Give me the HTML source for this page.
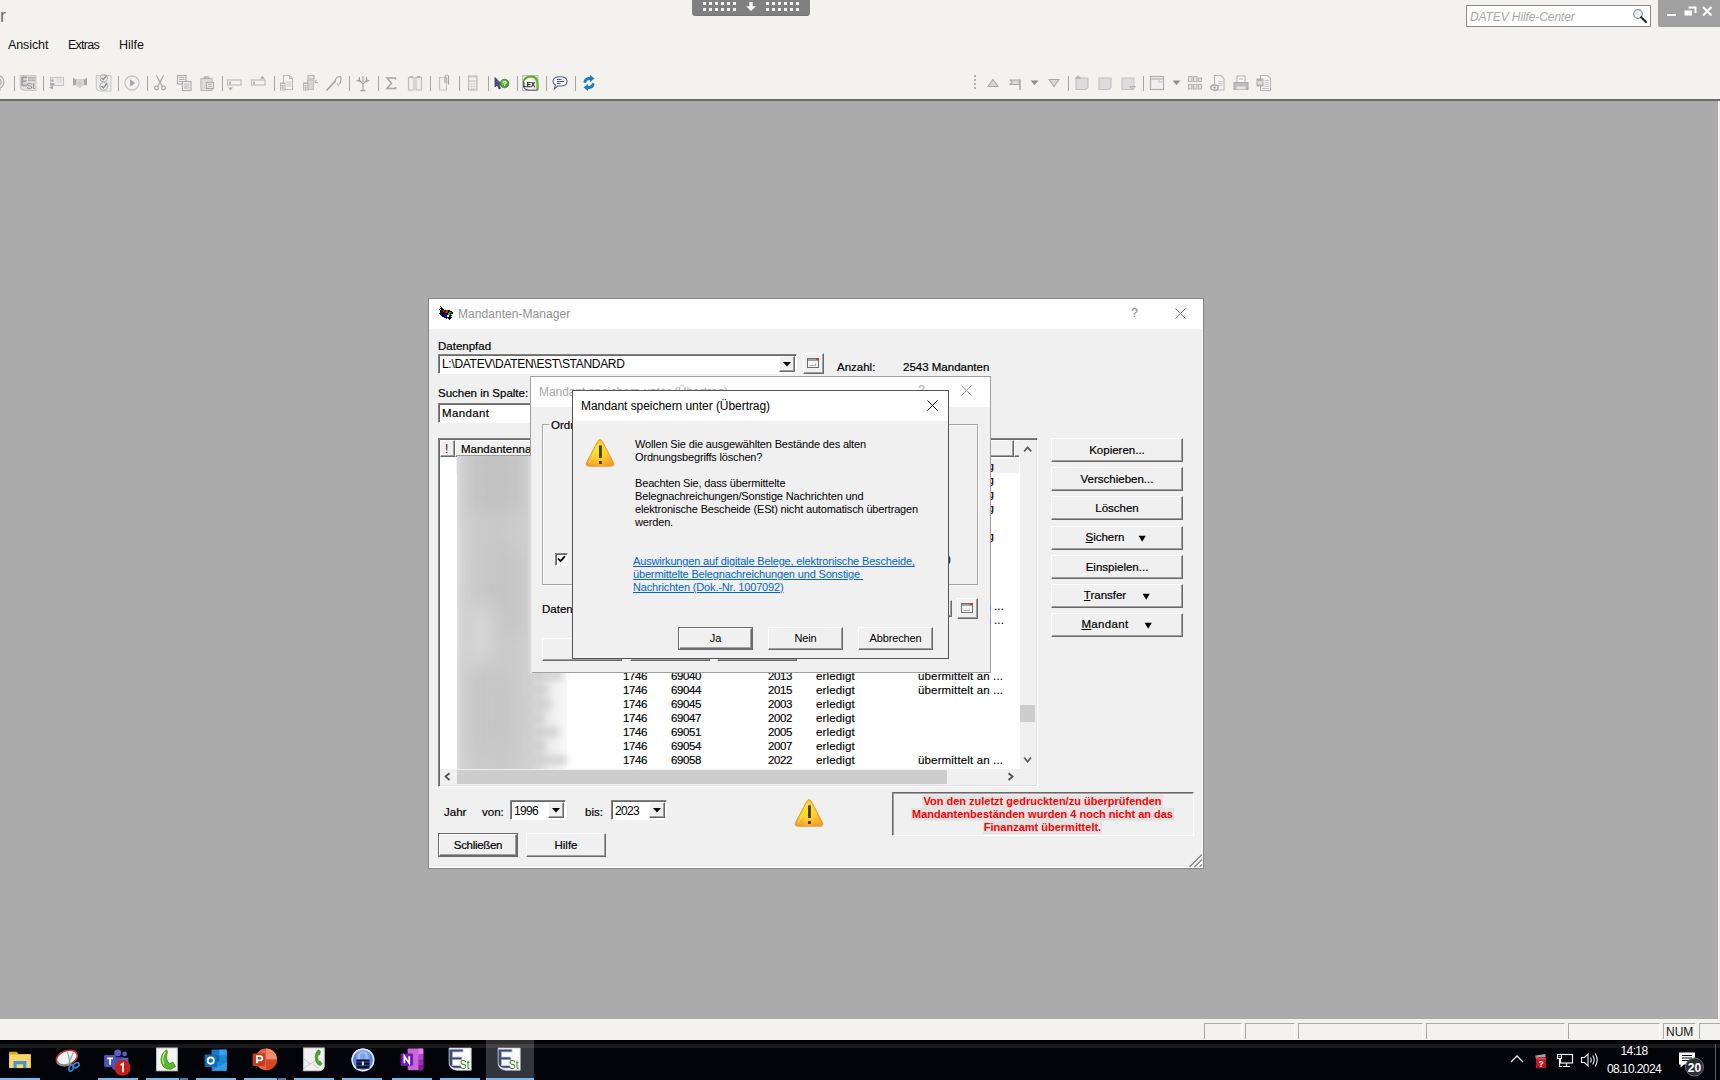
<!DOCTYPE html>
<html><head><meta charset="utf-8"><title>DATEV</title>
<style>
*{box-sizing:border-box;margin:0;padding:0}
html,body{width:1720px;height:1080px;overflow:hidden;background:#ababab;font-family:"Liberation Sans",sans-serif;font-size:12px;color:#000}
.abs{position:absolute}
#top{position:absolute;left:0;top:0;width:1720px;height:99px;background:#f3f2ef}
#topline{position:absolute;left:0;top:99px;width:1720px;height:2px;background:#6a6a6a}
#status{position:absolute;left:0;top:1019px;width:1720px;height:21px;background:#f3f2ef}
#taskbar{position:absolute;left:0;top:1040px;width:1720px;height:40px;background:#02040a}
.t{position:absolute;white-space:nowrap;line-height:1}
.dot{position:absolute;width:3px;height:3px;background:#f4f4f4}
.lbl{font-size:11.5px;margin-top:1px;-webkit-text-stroke:0.2px #000}
.row{font-size:11.5px;letter-spacing:0.15px;line-height:14px;-webkit-text-stroke:0.15px #000}
.num{font-size:11.5px;letter-spacing:-0.4px;line-height:14px;-webkit-text-stroke:0.15px #000}
.tah{font-size:11px;letter-spacing:-0.16px}
.btn{position:absolute;background:#f0f0f0;border:1px solid;border-color:#fff #696969 #696969 #fff;box-shadow:inset -1px -1px 0 #a0a0a0}
.sunk{position:absolute;background:#fff;border:1px solid;border-color:#828282 #fff #fff #828282;box-shadow:inset 1px 1px 0 #696969}
</style></head>
<body>
<div id="top"></div><div id="topline"></div><div class="t" style="left:0px;top:7px;font-size:18px;color:#6c6e74">r</div><div class="t" style="left:8px;top:39px;font-size:12.5px;letter-spacing:-0.1px;color:#111">Ansicht</div><div class="t" style="left:68px;top:39px;font-size:12.5px;letter-spacing:-0.75px;color:#111">Extras</div><div class="t" style="left:119px;top:39px;font-size:12.5px;letter-spacing:0px;color:#111">Hilfe</div><div class="abs" style="left:692px;top:0;width:118px;height:16px;background:#808080;border-radius:0 0 4px 4px;box-shadow:inset 0 -1px 0 #74747e"></div><i class="dot" style="left:703px;top:2px"></i><i class="dot" style="left:703px;top:8px"></i><i class="dot" style="left:709px;top:2px"></i><i class="dot" style="left:709px;top:8px"></i><i class="dot" style="left:715px;top:2px"></i><i class="dot" style="left:715px;top:8px"></i><i class="dot" style="left:721px;top:2px"></i><i class="dot" style="left:721px;top:8px"></i><i class="dot" style="left:727px;top:2px"></i><i class="dot" style="left:727px;top:8px"></i><i class="dot" style="left:733px;top:2px"></i><i class="dot" style="left:733px;top:8px"></i><i class="dot" style="left:766px;top:2px"></i><i class="dot" style="left:766px;top:8px"></i><i class="dot" style="left:772px;top:2px"></i><i class="dot" style="left:772px;top:8px"></i><i class="dot" style="left:778px;top:2px"></i><i class="dot" style="left:778px;top:8px"></i><i class="dot" style="left:784px;top:2px"></i><i class="dot" style="left:784px;top:8px"></i><i class="dot" style="left:790px;top:2px"></i><i class="dot" style="left:790px;top:8px"></i><i class="dot" style="left:796px;top:2px"></i><i class="dot" style="left:796px;top:8px"></i><svg class="abs" style="left:745px;top:1px" width="12" height="11" viewBox="0 0 12 11"><path d="M4.3 1h3.4v4.2h3.3L6 10 1 5.2h3.3z" fill="#f4f4f4"/></svg><div class="abs" style="left:1466px;top:5px;width:185px;height:22px;background:#fff;border:1px solid #8c8c8c"></div><div class="t" style="left:1470px;top:11px;font-size:12px;font-style:italic;color:#a9a6a6;letter-spacing:-0.1px">DATEV Hilfe-Center</div><svg class="abs" style="left:1632px;top:8px" width="16" height="16" viewBox="0 0 16 16"><circle cx="6" cy="6" r="4.3" fill="#e6f1fa" stroke="#8d9499" stroke-width="1.2"/><path d="M9.2 9.2L14 14" stroke="#2b2b2b" stroke-width="2.2" stroke-linecap="round"/></svg><div class="abs" style="left:1658px;top:0;width:62px;height:27px;background:#a0a0a0;border-radius:0 0 0 2px"></div><svg class="abs" style="left:1664px;top:3px" width="52" height="18" viewBox="0 0 52 18"><path d="M3 12h9" stroke="#fff" stroke-width="2"/><path d="M24.5 4.5h7v5.5" stroke="#fff" stroke-width="2" fill="none"/><rect x="20.5" y="7.5" width="7.5" height="5" fill="#fff"/><path d="M39 4l8.5 8.5M47.5 4L39 12.500" stroke="#fff" stroke-width="2"/></svg>
<div class="abs" style="left:14px;top:76px;width:1px;height:15px;background:#a5a5a5"></div><div class="abs" style="left:43px;top:76px;width:1px;height:15px;background:#a5a5a5"></div><div class="abs" style="left:118px;top:76px;width:1px;height:15px;background:#a5a5a5"></div><div class="abs" style="left:147px;top:76px;width:1px;height:15px;background:#a5a5a5"></div><div class="abs" style="left:222px;top:76px;width:1px;height:15px;background:#a5a5a5"></div><div class="abs" style="left:274px;top:76px;width:1px;height:15px;background:#a5a5a5"></div><div class="abs" style="left:349px;top:76px;width:1px;height:15px;background:#a5a5a5"></div><div class="abs" style="left:378px;top:76px;width:1px;height:15px;background:#a5a5a5"></div><div class="abs" style="left:430px;top:76px;width:1px;height:15px;background:#a5a5a5"></div><div class="abs" style="left:459px;top:76px;width:1px;height:15px;background:#a5a5a5"></div><div class="abs" style="left:488px;top:76px;width:1px;height:15px;background:#a5a5a5"></div><div class="abs" style="left:517px;top:76px;width:1px;height:15px;background:#a5a5a5"></div><div class="abs" style="left:546px;top:76px;width:1px;height:15px;background:#a5a5a5"></div><div class="abs" style="left:575px;top:76px;width:1px;height:15px;background:#a5a5a5"></div><svg class="abs" style="will-change:transform;left:-12.0px;top:73.5px" width="18" height="18" viewBox="0 0 18 18" fill="none" stroke="#a8a8a8" stroke-width="1.1"><circle cx="9" cy="8" r="7" fill="#e9e9e9"/><circle cx="9" cy="8" r="4"/><path d="M4 16h9" /></svg><svg class="abs" style="will-change:transform;left:19.0px;top:73.5px" width="18" height="18" viewBox="0 0 18 18" fill="none" stroke="#a8a8a8" stroke-width="1.1"><path d="M1.200 1.500h15.800v15H5q-3.800-.5-3.800-4z" fill="#dcdcdc" stroke="#c2c2c2" stroke-width=".8"/><path d="M2.200 2.500h5.800v1.700H4.200v2.100h3.300V8H4.200v2.600h3.800v1.700H2.200z" fill="#a0a0a0" stroke="none"/><path d="M9 3.800h7.500M9 6.200h7.500" stroke="#b2b2b2" stroke-width="1.400"/><text x="7.600" y="15.300" font-family="Liberation Sans" font-size="9" fill="#8a8a8a" stroke="none">St</text></svg><svg class="abs" style="will-change:transform;left:47.0px;top:73.5px" width="18" height="18" viewBox="0 0 18 18" fill="none" stroke="#a8a8a8" stroke-width="1.1"><rect x="3.500" y="3.500" width="13" height="8" fill="#ececec" stroke="#c4c4c4"/><circle cx="5.500" cy="6.500" r="1.300" fill="#a8a8a8" stroke="none"/><path d="M3.500 9h4v2.500h-4z" fill="#a8a8a8" stroke="none"/><path d="M10 6h5M10 8h5" stroke="#d0d0d0"/><path d="M2 13.500l4-2v4z" fill="#a8a8a8" stroke="none"/></svg><svg class="abs" style="will-change:transform;left:71.0px;top:73.5px" width="18" height="18" viewBox="0 0 18 18" fill="none" stroke="#a8a8a8" stroke-width="1.1"><path d="M4.500 6l2.500-.8 2 .6 2-.6 2.500.8v4.500l-2 .8-2.500 2.200-2.200-.8-2.300-2.200z" fill="#d6d6d6" stroke="#c0c0c0" stroke-width=".7"/><path d="M2 3.500l3 2.300v5L2 11.500zM16 3.500l-3 2.300v5l3 .7z" fill="#a6a6a6" stroke="none"/><path d="M6.500 8.500l3 2.500M8 7.500l3 2.500" stroke="#b8b8b8" stroke-width=".8"/></svg><svg class="abs" style="will-change:transform;left:94.5px;top:73.5px" width="18" height="18" viewBox="0 0 18 18" fill="none" stroke="#a8a8a8" stroke-width="1.1"><path d="M1.200 1.500h14.800v15.500H5q-3.800-.5-3.800-4z" fill="#ececec" stroke="#c4c4c4" stroke-width=".9"/><circle cx="8.800" cy="4.200" r="3.800" stroke="#b4b4b4" stroke-width="1"/><circle cx="8.800" cy="12.300" r="4" stroke="#b4b4b4" stroke-width="1"/><path d="M6.500 3.800l1.800 1.700 3.400-4M6.300 12l2 2 4-5" stroke="#909090" stroke-width="1.400"/></svg><svg class="abs" style="will-change:transform;left:123.0px;top:73.5px" width="18" height="18" viewBox="0 0 18 18" fill="none" stroke="#a8a8a8" stroke-width="1.1"><circle cx="9" cy="9" r="7" fill="#f1f1f1" stroke="#c6c6c6" stroke-width="1.300"/><path d="M7 5.200l5.200 3.800L7 12.800z" fill="#a8a8a8" stroke="none"/></svg><svg class="abs" style="will-change:transform;left:151.0px;top:73.5px" width="18" height="18" viewBox="0 0 18 18" fill="none" stroke="#a8a8a8" stroke-width="1.1"><path d="M5.500 1.500l5.800 11M12.500 1.500l-5.800 11" stroke="#a8a8a8" stroke-width="1.300"/><circle cx="5.500" cy="14" r="1.900"/><circle cx="12.500" cy="14" r="1.900"/></svg><svg class="abs" style="will-change:transform;left:174.5px;top:73.5px" width="18" height="18" viewBox="0 0 18 18" fill="none" stroke="#a8a8a8" stroke-width="1.1"><rect x="2.500" y="1.500" width="8.500" height="8.500" fill="#f0f0f0"/><rect x="7.500" y="7.500" width="8.500" height="9" fill="#f0f0f0"/><path d="M4 3.500h5.500M4 5.500h5.500M4 7.500h3M9 10h5.500M9 12h5.500M9 14h5.500" stroke-width=".9"/></svg><svg class="abs" style="will-change:transform;left:198.0px;top:73.5px" width="18" height="18" viewBox="0 0 18 18" fill="none" stroke="#a8a8a8" stroke-width="1.1"><path d="M3 4.500h11v12H3z" fill="#dcdcdc" stroke="#b8b8b8"/><path d="M6 4.500v-1.500h1.500q1-2.200 2 0H11v1.500z" fill="#c8c8c8" stroke="#a8a8a8" stroke-width=".9"/><rect x="8.500" y="8.500" width="7" height="6" fill="#eee" stroke="#a8a8a8"/><path d="M10 10.500h4M10 12.500h4" stroke-width=".9"/></svg><svg class="abs" style="will-change:transform;left:226.0px;top:73.5px" width="18" height="18" viewBox="0 0 18 18" fill="none" stroke="#a8a8a8" stroke-width="1.1"><rect x="1.500" y="6" width="13.500" height="5" fill="#f3f3f3" stroke="#bdbdbd" stroke-width="1.200"/><path d="M4 7.500v2.500" stroke="#9a9a9a" stroke-width="1.300"/><path d="M2 13.500h5l-2.500 2.800z" fill="#a8a8a8" stroke="none"/></svg><svg class="abs" style="will-change:transform;left:250.0px;top:73.5px" width="18" height="18" viewBox="0 0 18 18" fill="none" stroke="#a8a8a8" stroke-width="1.1"><rect x="1.500" y="6" width="13.500" height="5" fill="#f3f3f3" stroke="#bdbdbd" stroke-width="1.200"/><path d="M4 7.500v2.500" stroke="#9a9a9a" stroke-width="1.300"/><path d="M10 4.800h5l-2.500-2.800z" fill="#a8a8a8" stroke="none"/></svg><svg class="abs" style="will-change:transform;left:277.5px;top:73.5px" width="18" height="18" viewBox="0 0 18 18" fill="none" stroke="#a8a8a8" stroke-width="1.1"><path d="M5.500 1.500h6l3 3v11h-9z" fill="#f4f4f4" stroke="#b9b9b9"/><path d="M11.500 1.500v3h3" stroke="#b9b9b9"/><path d="M8.500 8h5M8.500 10h5M8.500 12h5" stroke="#c0c0c0" stroke-width=".9"/><rect x="2" y="8.500" width="5.500" height="8" fill="#b9b9b9" stroke="none"/><path d="M3 10h3.500v1.300H3zM3 12.300h1.300v1.200H3zM5.200 12.300h1.300v1.200H5.200zM3 14.300h1.300v1.200H3zM5.200 14.300h1.300v1.200H5.200z" fill="#f2f2f2" stroke="none"/></svg><svg class="abs" style="will-change:transform;left:301.0px;top:73.5px" width="18" height="18" viewBox="0 0 18 18" fill="none" stroke="#a8a8a8" stroke-width="1.1"><rect x="7" y="1.500" width="6" height="3.500" fill="#e4e4e4" stroke="#b5b5b5"/><rect x="6.500" y="6" width="6" height="9.500" fill="#d6d6d6" stroke="#c0c0c0"/><path d="M13.500 8.500l2-2.500M14 9l3-.5" stroke="#a8a8a8" stroke-width="1.200"/><rect x="2" y="8.500" width="5.500" height="8" fill="#b4b4b4" stroke="none"/><path d="M3 10h3.500v1.300H3zM3 12.300h1.300v1.200H3zM5.200 12.300h1.300v1.200H5.200zM3 14.300h1.300v1.200H3zM5.200 14.300h1.300v1.200H5.200z" fill="#f2f2f2" stroke="none"/></svg><svg class="abs" style="will-change:transform;left:324.5px;top:73.5px" width="18" height="18" viewBox="0 0 18 18" fill="none" stroke="#a8a8a8" stroke-width="1.1"><path d="M1.500 16.500l9-9.500" stroke="#9d9d9d" stroke-width="1.600"/><path d="M10 7q1-4.500 5.500-4.500q1.500 3-1 7.500" stroke="#a8a8a8" stroke-width="1.200"/><path d="M12 9.500l2 2.500" stroke="#a8a8a8"/></svg><svg class="abs" style="will-change:transform;left:353.5px;top:73.5px" width="18" height="18" viewBox="0 0 18 18" fill="none" stroke="#a8a8a8" stroke-width="1.1"><path d="M9 16.500V9M9 10L4.500 5.500M9 10l4.500-4.500M9 8V2M6.500 7.500l-4-1M11.500 7.500l4-1M5.500 6.500V3M12.500 6.500V3" stroke="#a0a0a0" stroke-width="1.100"/><path d="M6.500 16.500h5" stroke="#a0a0a0" stroke-width="1.400"/></svg><svg class="abs" style="will-change:transform;left:382.0px;top:73.5px" width="18" height="18" viewBox="0 0 18 18" fill="none" stroke="#a8a8a8" stroke-width="1.1"><path d="M13.500 5.500V4H5l4.500 5.300L5 14.500h8.500V13" stroke="#a4a4a4" stroke-width="1.500" fill="none"/></svg><svg class="abs" style="will-change:transform;left:406.0px;top:73.5px" width="18" height="18" viewBox="0 0 18 18" fill="none" stroke="#a8a8a8" stroke-width="1.1"><rect x="2.500" y="3.500" width="5.500" height="12.500" fill="#efefef" stroke="#c0c0c0" stroke-width="1.200"/><rect x="10" y="3.500" width="5.500" height="12.500" fill="#efefef" stroke="#c0c0c0" stroke-width="1.200"/><path d="M3.500 2h3.500v2h-3.500zM11 2h3.500v2H11z" fill="#b5b5b5" stroke="none"/></svg><svg class="abs" style="will-change:transform;left:436.0px;top:73.5px" width="18" height="18" viewBox="0 0 18 18" fill="none" stroke="#a8a8a8" stroke-width="1.1"><path d="M3.500 3.500h7v12.500h-7z" fill="#f0f0f0" stroke="#c3c3c3" stroke-width="1.200"/><path d="M9 9V3q0-2 1.800-2t1.800 2v7.500" stroke="#a4a4a4" stroke-width="1.100"/><path d="M10.800 4v5" stroke="#b5b5b5"/></svg><svg class="abs" style="will-change:transform;left:463.5px;top:73.5px" width="18" height="18" viewBox="0 0 18 18" fill="none" stroke="#a8a8a8" stroke-width="1.1"><rect x="4.500" y="2" width="8.500" height="14" fill="#d8d8d8" stroke="#bcbcbc"/><rect x="5.500" y="3.500" width="6.500" height="2.500" fill="#f0f0f0" stroke="none"/><path d="M5.500 8h1.500v1.500H5.500zM8 8h1.500v1.500H8zM10.500 8H12v1.500h-1.500zM5.500 10.500h1.500V12H5.500zM8 10.500h1.500V12H8zM10.500 10.500H12V12h-1.500zM5.500 13h1.500v1.500H5.500zM8 13h1.500v1.500H8zM10.500 13H12v1.500h-1.500z" fill="#f3f3f3" stroke="none"/></svg><svg class="abs" style="will-change:transform;left:492.0px;top:73.5px" width="18" height="18" viewBox="0 0 18 18" fill="none" stroke="#a8a8a8" stroke-width="1.1"><path d="M3 3.500v9.500l2.200-2.200 1.900 4.200 1.500-.7-1.900-4h3z" fill="#4a5a8c" stroke="#2d3a66" stroke-width=".8"/><circle cx="12.500" cy="9.500" r="4.300" fill="#5a9e2f" stroke="#3f7a1d" stroke-width=".8"/><circle cx="11.800" cy="8.500" r="2.600" fill="#8cc95a" stroke="none" opacity=".7"/><text x="10.400" y="12.300" font-family="Liberation Sans" font-weight="bold" font-size="7.500" fill="#fff" stroke="none">?</text></svg><svg class="abs" style="will-change:transform;left:521.0px;top:73.5px" width="18" height="18" viewBox="0 0 18 18" fill="none" stroke="#a8a8a8" stroke-width="1.1"><rect x="1.500" y="1.500" width="15.500" height="15" fill="#e6e6e6" stroke="#b4b4b4" stroke-width=".8"/><path d="M2.500 8.500Q3.500 2.500 10 2.500T16.500 9.500v6.500" fill="none" stroke="#5aa820" stroke-width="2"/><path d="M14.500 5q2 2.500 1.800 10" fill="none" stroke="#7cc43c" stroke-width="1.200"/><path d="M2.200 10q0 5.500 6 5.800h8.300v.8H8Q1.800 16.500 2.200 10z" fill="#3a3a3a" stroke="none"/><ellipse cx="8.300" cy="10" rx="6" ry="4.800" fill="#fff" stroke="none"/><text x="2" y="12.800" font-family="Liberation Sans" font-weight="bold" font-size="7.800" fill="#1c1c1c" stroke="#1c1c1c" stroke-width=".25" textLength="12" lengthAdjust="spacingAndGlyphs">LEX</text></svg><svg class="abs" style="will-change:transform;left:551.0px;top:73.5px" width="18" height="18" viewBox="0 0 18 18" fill="none" stroke="#a8a8a8" stroke-width="1.1"><path d="M9 2.800q7 0 7 4.600t-7 4.600q-1.300 0-2.300-.2L3.500 14.800l.9-3.800Q2 9.700 2 7.400 2 2.800 9 2.800z" fill="#f6f7fa" stroke="#56627a" stroke-width="1.100"/><path d="M6 5.500h4.500M6 7.500h7M6 9.500h3.500" stroke="#2e3852" stroke-width=".85"/></svg><svg class="abs" style="will-change:transform;left:580.0px;top:73.5px" width="18" height="18" viewBox="0 0 18 18" fill="none" stroke="#a8a8a8" stroke-width="1.1"><path d="M3.500 8.500q0-5 5.500-5.500l1 0V1l4.500 3.500-4.500 3.500V6q-3.500 0-4 3z" fill="#1b7fc0" stroke="none"/><path d="M14.500 9.500q0 5-5.500 5.500l-1 0v2l-4.500-3.500L8 10v2q3.500 0 4-3z" fill="#1b7fc0" stroke="none"/></svg><div class="abs" style="left:974px;top:75px;width:2px;height:2px;background:#b3b3b3"></div><div class="abs" style="left:974px;top:79px;width:2px;height:2px;background:#b3b3b3"></div><div class="abs" style="left:974px;top:83px;width:2px;height:2px;background:#b3b3b3"></div><div class="abs" style="left:974px;top:87px;width:2px;height:2px;background:#b3b3b3"></div><div class="abs" style="left:1068px;top:76px;width:1px;height:15px;background:#a5a5a5"></div><div class="abs" style="left:1143px;top:76px;width:1px;height:15px;background:#a5a5a5"></div><svg class="abs" style="will-change:transform;left:983.5px;top:73.5px" width="18" height="18" viewBox="0 0 18 18" fill="none" stroke="#a8a8a8" stroke-width="1.1"><path d="M4 12.500h10L9 5.500z" fill="#d8d8d8" stroke="#a8a8a8"/></svg><svg class="abs" style="will-change:transform;left:1007.0px;top:73.5px" width="18" height="18" viewBox="0 0 18 18" fill="none" stroke="#a8a8a8" stroke-width="1.1"><path d="M3 6h9.500v4.500H3l2-2.200z" fill="#d8d8d8" stroke="#a8a8a8"/><path d="M13 5.500v10.500" stroke="#a8a8a8" stroke-width="1.500"/></svg><svg class="abs" style="left:1030px;top:80px" width="9" height="6"><path d="M0.500 0.500h8L4.500 5z" fill="#8e8e8e"/></svg><svg class="abs" style="will-change:transform;left:1044.5px;top:73.5px" width="18" height="18" viewBox="0 0 18 18" fill="none" stroke="#a8a8a8" stroke-width="1.1"><path d="M4 5.500h10L9 12.500z" fill="#d8d8d8" stroke="#a8a8a8"/></svg><svg class="abs" style="will-change:transform;left:1072.5px;top:73.5px" width="18" height="18" viewBox="0 0 18 18" fill="none" stroke="#a8a8a8" stroke-width="1.1"><path d="M3 4h12v9.500l-2 2H3z" fill="#dcdcdc" stroke="#c2c2c2"/><path d="M2.500 4.200h5L5 1.500z" fill="#c4c4c4" stroke="#a8a8a8" stroke-width=".8"/></svg><svg class="abs" style="will-change:transform;left:1095.5px;top:73.5px" width="18" height="18" viewBox="0 0 18 18" fill="none" stroke="#a8a8a8" stroke-width="1.1"><path d="M3 4h12v9.500l-2 2H3z" fill="#dcdcdc" stroke="#c2c2c2"/></svg><svg class="abs" style="will-change:transform;left:1118.5px;top:73.5px" width="18" height="18" viewBox="0 0 18 18" fill="none" stroke="#a8a8a8" stroke-width="1.1"><path d="M3 4h12v9.500l-2 2H3z" fill="#dcdcdc" stroke="#c2c2c2"/><path d="M10.500 12.500h6L13.500 16z" fill="#cfcfcf" stroke="#a8a8a8" stroke-width=".8"/></svg><svg class="abs" style="will-change:transform;left:1148.0px;top:73.5px" width="18" height="18" viewBox="0 0 18 18" fill="none" stroke="#a8a8a8" stroke-width="1.1"><rect x="2.500" y="2.500" width="13" height="13" fill="#efefef" stroke="#b0b0b0" stroke-width="1.200"/><path d="M2.500 5h13" stroke="#b0b0b0"/><path d="M11 5v3h4.500" stroke="#c4c4c4"/></svg><svg class="abs" style="left:1172px;top:80px" width="9" height="6"><path d="M0.500 0.500h8L4.500 5z" fill="#8e8e8e"/></svg><svg class="abs" style="will-change:transform;left:1185.5px;top:73.5px" width="18" height="18" viewBox="0 0 18 18" fill="none" stroke="#a8a8a8" stroke-width="1.1"><path d="M2.500 2.500h3.500v5H2.500zM7.500 2.500H11v5H7.500zM12.500 4h3v3.500h-3zM2.500 10.500h3.500v4.500H2.500zM7.500 10.500H11v4.500H7.500zM12.500 10.500h3v4.500h-3z" fill="#e4e4e4" stroke="#b5b5b5"/></svg><svg class="abs" style="will-change:transform;left:1208.5px;top:73.5px" width="18" height="18" viewBox="0 0 18 18" fill="none" stroke="#a8a8a8" stroke-width="1.1"><path d="M5.500 1.500h6.500l3 3v11.500H5.500z" fill="#f4f4f4" stroke="#b5b5b5"/><path d="M9 7.500h4.500M9 9.500h4.500M9 11.500h4.500" stroke="#c0c0c0" stroke-width=".9"/><ellipse cx="5.500" cy="13.500" rx="3.800" ry="2.600" fill="#e8e8e8" stroke="#a0a0a0"/><circle cx="5.500" cy="13.500" r="1.100" fill="#9a9a9a" stroke="none"/></svg><svg class="abs" style="will-change:transform;left:1231.5px;top:73.5px" width="18" height="18" viewBox="0 0 18 18" fill="none" stroke="#a8a8a8" stroke-width="1.1"><path d="M5 8.500V2h8v6.500" fill="#f4f4f4" stroke="#b5b5b5"/><path d="M2 8.500h14v7H2z" fill="#bdbdbd" stroke="#a8a8a8"/><path d="M4.500 12.500h9v3h-9z" fill="#e0e0e0" stroke="none"/><path d="M7 5h4" stroke="#c0c0c0"/></svg><svg class="abs" style="will-change:transform;left:1254.5px;top:73.5px" width="18" height="18" viewBox="0 0 18 18" fill="none" stroke="#a8a8a8" stroke-width="1.1"><path d="M5.500 1.500h7l3 3v12H5.500z" fill="#f4f4f4" stroke="#b5b5b5"/><path d="M9.500 6.500h4.500M9.500 8.500h4.500M9.500 10.500h4.500M9.500 12.500h4.500M7 14.500h7" stroke="#c0c0c0" stroke-width=".9"/><rect x="1.500" y="4.500" width="7" height="8" fill="#b0b0b0" stroke="none"/><path d="M2.800 6.500l1 4 1.200-3.200 1.200 3.200 1-4" stroke="#f2f2f2" stroke-width=".9"/></svg>
<div class="abs" style="left:428px;top:298px;width:776px;height:571px;background:#f0f0f0;border:1px solid #858585;box-shadow:inset -1px -1px 0 #fff"></div><div class="abs" style="left:429px;top:299px;width:774px;height:30px;background:#fff"></div><svg class="abs" style="left:437px;top:306px" width="17" height="15" viewBox="0 0 17 15" shape-rendering="crispEdges"><path d="M3 0h1v1h1v1h1v1h1v1h6v1h2v1h1v2h-2v1h1v1h-1v1h1v1h-1v1h-1v1h-1v-1h-1v-1h-1v1h-1v-1h-2v-1h-2v-1H4V9H3V8H2V7h1V6H2V5h1V4H2V3h1V2h1V1H3z" fill="#000"/><path d="M3 3h1v1H3zM2 5h1v1H2zM1 7h1v1H1zM3 1h1v1H3z" fill="#fff"/><path d="M4 4h1v1H4zM6 4h2v1H6zM6 5h1v1H6zM8.500 4h2v1h-2zM8.500 5h2v1.500h-2zM8 6h2v1H8z" fill="#f00"/><path d="M11.500 5.500h2v1h-2zM11 6.500h2v1.500h-2zM11 8h1.500v.5H11z" fill="#0d0"/><path d="M3 6h1.500v1H3zM4 7.500h2V9H4zM7 8h2.500v2.500H7z" fill="#00f"/><path d="M10 8.500h2v1h-2zM9.500 9.500h2.500V11H9.500z" fill="#ff0"/></svg><div class="t" style="left:458px;top:308px;font-size:12px;letter-spacing:0.05px;color:#8f8f8f">Mandanten-Manager</div><div class="t" style="left:1131px;top:307px;font-size:12.5px;color:#858585">?</div><svg class="abs" style="left:1175px;top:308px" width="11" height="11" viewBox="0 0 11 11"><path d="M.5.5l10 10M10.500.5l-10 10" stroke="#777" stroke-width="1"/></svg><div class="t lbl" style="left:438px;top:340px">Datenpfad</div><div class="sunk" style="left:438px;top:354px;width:359px;height:20px"></div><div class="t" style="left:442px;top:358px;font-size:12px;letter-spacing:-0.3px">L:\DATEV\DATEN\EST\STANDARD</div><div class="btn" style="left:779px;top:356px;width:16px;height:16px"></div><svg class="abs" style="left:783px;top:362px" width="8" height="5"><path d="M0 0h8L4 4.500z" fill="#000"/></svg><div class="btn" style="left:803px;top:353px;width:21px;height:21px"></div><svg class="abs" style="left:807px;top:358px" width="12" height="11" viewBox="0 0 12 11"><rect x=".5" y=".5" width="11" height="9" fill="#f6f6f6" stroke="#6e6e6e"/><rect x="1" y="1" width="10" height="2" fill="#a0a0a0"/><path d="M2.500 7.500h6M8.500 5.500v2" stroke="#9a9a9a" stroke-width=".8"/><rect x="9" y="0" width="3" height="2" fill="#e03030"/></svg><div class="t lbl" style="left:837px;top:361px">Anzahl:</div><div class="t lbl" style="left:903px;top:361px">2543 Mandanten</div><div class="t lbl" style="left:438px;top:387px">Suchen in Spalte:</div><div class="sunk" style="left:438px;top:403px;width:120px;height:20px"></div><div class="t lbl" style="left:442px;top:407px;letter-spacing:.35px">Mandant</div><div class="abs" style="left:438px;top:438px;width:600px;height:349px;background:#fff;border:1px solid;border-color:#828282 #fff #fff #828282;box-shadow:inset 1px 1px 0 #696969,inset -1px -1px 0 #e3e3e3"></div><div class="abs" style="left:440px;top:440px;width:580px;height:17px;background:#f0f0f0"></div><div class="abs" style="left:440px;top:440px;width:15px;height:17px;background:#f0f0f0;border:1px solid;border-color:#fff #696969 #696969 #fff;box-shadow:inset -1px -1px 0 #a0a0a0"></div><div class="abs" style="left:455px;top:440px;width:200px;height:17px;background:#f0f0f0;border:1px solid;border-color:#fff #696969 #696969 #fff;box-shadow:inset -1px -1px 0 #a0a0a0"></div><div class="abs" style="left:900px;top:440px;width:114px;height:17px;background:#f0f0f0;border:1px solid;border-color:#fff #696969 #696969 #fff;box-shadow:inset -1px -1px 0 #a0a0a0"></div><div class="abs" style="left:1014px;top:440px;width:5px;height:17px;background:#f0f0f0;border-left:1px solid #fff;border-top:1px solid #fff;border-bottom:1px solid #696969;box-shadow:inset 0 -1px 0 #a0a0a0"></div><div class="t" style="left:445px;top:443px;font-size:12px;color:#4a0028">!</div><div class="t lbl" style="left:461px;top:443px">Mandantenname</div><div class="abs" style="left:456px;top:459px;width:563px;height:14px;background:#f0f0f0"></div><div class="abs" style="left:457px;top:456px;width:110px;height:314px;background:linear-gradient(90deg,#d6d6d6 0,#cfcfcf 20%,#d2d2d2 60%,#d4d4d4 68%,#dadada 75%,#e9e9e9 83%,#f3f3f3 92%,#f8f8f8 100%)"></div><div class="abs" style="left:457px;top:456px;width:76px;height:314px;overflow:hidden;background:linear-gradient(90deg,#dedede 0,#d2d2d2 7%,#cbcbcb 25%,#c9c9c9 55%,#cecece 85%,#d3d3d3 100%)"><div class="abs" style="left:14px;top:-6px;width:50px;height:60px;background:#c2c2c2;filter:blur(9px)"></div><div class="abs" style="left:30px;top:90px;width:34px;height:90px;background:#c5c5c5;filter:blur(10px)"></div><div class="abs" style="left:10px;top:150px;width:26px;height:60px;background:#d6d6d6;filter:blur(9px)"></div><div class="abs" style="left:16px;top:215px;width:40px;height:80px;background:#c6c6c6;filter:blur(10px)"></div></div><div class="abs" style="left:533px;top:671px;width:30px;height:10px;background:#cfcfcf;filter:blur(3px);opacity:.8"></div><div class="abs" style="left:533px;top:685px;width:14px;height:10px;background:#cfcfcf;filter:blur(3px);opacity:.8"></div><div class="abs" style="left:533px;top:699px;width:18px;height:10px;background:#cfcfcf;filter:blur(3px);opacity:.8"></div><div class="abs" style="left:533px;top:713px;width:10px;height:10px;background:#cfcfcf;filter:blur(3px);opacity:.8"></div><div class="abs" style="left:533px;top:727px;width:26px;height:10px;background:#cfcfcf;filter:blur(3px);opacity:.8"></div><div class="abs" style="left:533px;top:741px;width:12px;height:10px;background:#cfcfcf;filter:blur(3px);opacity:.8"></div><div class="abs" style="left:533px;top:755px;width:34px;height:10px;background:#cfcfcf;filter:blur(3px);opacity:.8"></div><div class="t num" style="left:623px;top:669px">1746</div><div class="t num" style="left:671px;top:669px">69040</div><div class="t num" style="left:768px;top:669px">2013</div><div class="t row" style="left:816px;top:669px">erledigt</div><div class="t row" style="left:918px;top:669px">übermittelt an ...</div><div class="t num" style="left:623px;top:683px">1746</div><div class="t num" style="left:671px;top:683px">69044</div><div class="t num" style="left:768px;top:683px">2015</div><div class="t row" style="left:816px;top:683px">erledigt</div><div class="t row" style="left:918px;top:683px">übermittelt an ...</div><div class="t num" style="left:623px;top:697px">1746</div><div class="t num" style="left:671px;top:697px">69045</div><div class="t num" style="left:768px;top:697px">2003</div><div class="t row" style="left:816px;top:697px">erledigt</div><div class="t num" style="left:623px;top:711px">1746</div><div class="t num" style="left:671px;top:711px">69047</div><div class="t num" style="left:768px;top:711px">2002</div><div class="t row" style="left:816px;top:711px">erledigt</div><div class="t num" style="left:623px;top:725px">1746</div><div class="t num" style="left:671px;top:725px">69051</div><div class="t num" style="left:768px;top:725px">2005</div><div class="t row" style="left:816px;top:725px">erledigt</div><div class="t num" style="left:623px;top:739px">1746</div><div class="t num" style="left:671px;top:739px">69054</div><div class="t num" style="left:768px;top:739px">2007</div><div class="t row" style="left:816px;top:739px">erledigt</div><div class="t num" style="left:623px;top:753px">1746</div><div class="t num" style="left:671px;top:753px">69058</div><div class="t num" style="left:768px;top:753px">2022</div><div class="t row" style="left:816px;top:753px">erledigt</div><div class="t row" style="left:918px;top:753px">übermittelt an ...</div><div class="abs" style="left:991px;top:459px;width:4px;height:14px;overflow:hidden"><div class="t row" style="left:-3.500px;top:0px">g</div></div><div class="abs" style="left:991px;top:473px;width:4px;height:14px;overflow:hidden"><div class="t row" style="left:-3.500px;top:0px">g</div></div><div class="abs" style="left:991px;top:487px;width:4px;height:14px;overflow:hidden"><div class="t row" style="left:-3.500px;top:0px">g</div></div><div class="abs" style="left:991px;top:501px;width:4px;height:14px;overflow:hidden"><div class="t row" style="left:-3.500px;top:0px">g</div></div><div class="abs" style="left:991px;top:529px;width:4px;height:14px;overflow:hidden"><div class="t row" style="left:-3.500px;top:0px">g</div></div><div class="t row" style="left:994px;top:599px">...</div><div class="t row" style="left:994px;top:613px">...</div><div class="abs" style="left:1020px;top:440px;width:16px;height:345px;background:#f0f0f0"></div><svg class="abs" style="left:1023px;top:445px" width="10" height="8"><path d="M1.200 6.300l3.500-4 3.500 4" stroke="#606060" stroke-width="1.800" fill="none"/></svg><svg class="abs" style="left:1023px;top:756px" width="10" height="8"><path d="M1.200 1.500l3.400 4 3.400-4" stroke="#606060" stroke-width="1.800" fill="none"/></svg><div class="abs" style="left:1020px;top:705px;width:15px;height:17px;background:#cdcdcd"></div><div class="abs" style="left:440px;top:769px;width:596px;height:16px;background:#f0f0f0"></div><div class="abs" style="left:457px;top:770px;width:490px;height:14px;background:#cdcdcd"></div><svg class="abs" style="left:444px;top:772px" width="8" height="10"><path d="M5.500 1.200l-4 3.400 4 3.400" stroke="#505050" stroke-width="1.800" fill="none"/></svg><svg class="abs" style="left:1007px;top:772px" width="8" height="10"><path d="M1.500 1.200l4 3.400-4 3.400" stroke="#505050" stroke-width="1.800" fill="none"/></svg><div class="btn" style="left:1051px;top:438px;width:132px;height:24px"></div><div class="t lbl" style="left:1051px;top:444px;width:132px;text-align:center">Kopieren...</div><div class="btn" style="left:1051px;top:467px;width:132px;height:24px"></div><div class="t lbl" style="left:1051px;top:473px;width:132px;text-align:center">Verschieben...</div><div class="btn" style="left:1051px;top:496px;width:132px;height:24px"></div><div class="t lbl" style="left:1051px;top:502px;width:132px;text-align:center">Löschen</div><div class="btn" style="left:1051px;top:526px;width:132px;height:24px"></div><div class="t lbl" style="left:1051px;top:531px;width:108px;text-align:center"><u>S</u>ichern</div><svg class="abs" style="left:1138px;top:535px" width="9" height="8"><path d="M.6 .8h7.200L4.200 6.800z" fill="#000"/></svg><div class="btn" style="left:1051px;top:555px;width:132px;height:24px"></div><div class="t lbl" style="left:1051px;top:561px;width:132px;text-align:center">Einspielen...</div><div class="btn" style="left:1051px;top:584px;width:132px;height:24px"></div><div class="t lbl" style="left:1051px;top:589px;width:108px;text-align:center"><u>T</u>ransfer</div><svg class="abs" style="left:1142px;top:593px" width="9" height="8"><path d="M.6 .8h7.200L4.200 6.800z" fill="#000"/></svg><div class="btn" style="left:1051px;top:613px;width:132px;height:24px"></div><div class="t lbl" style="left:1051px;top:618px;width:108px;text-align:center;letter-spacing:.35px"><u>M</u>andant</div><svg class="abs" style="left:1144px;top:622px" width="9" height="8"><path d="M.6 .8h7.200L4.200 6.800z" fill="#000"/></svg><div class="t lbl" style="left:444px;top:806px">Jahr</div><div class="t lbl" style="left:482px;top:806px">von:</div><div class="t lbl" style="left:585px;top:806px">bis:</div><div class="sunk" style="left:510px;top:800px;width:56px;height:20px"></div><div class="t" style="left:514px;top:805px;font-size:12px;letter-spacing:-0.7px">1996</div><div class="btn" style="left:548px;top:802px;width:16px;height:16px"></div><svg class="abs" style="left:552px;top:808px" width="8" height="5"><path d="M0 0h8L4 4.500z" fill="#000"/></svg><div class="sunk" style="left:611px;top:800px;width:56px;height:20px"></div><div class="t" style="left:615px;top:805px;font-size:12px;letter-spacing:-0.7px">2023</div><div class="btn" style="left:649px;top:802px;width:16px;height:16px"></div><svg class="abs" style="left:653px;top:808px" width="8" height="5"><path d="M0 0h8L4 4.500z" fill="#000"/></svg><div class="abs" style="left:438px;top:833px;width:80px;height:24px;border:1px solid #6b6b6b"></div><div class="btn" style="left:439px;top:834px;width:78px;height:22px"></div><div class="t lbl" style="left:438px;top:839px;width:80px;text-align:center;letter-spacing:-0.3px">Schließen</div><div class="btn" style="left:526px;top:833px;width:80px;height:24px"></div><div class="t lbl" style="left:526px;top:839px;width:80px;text-align:center">Hilfe</div><svg class="abs" style="left:794px;top:798px" width="30" height="31" viewBox="0 0 30 31"><defs><radialGradient id="wg1" cx=".46" cy=".42" r=".62"><stop offset="0" stop-color="#ffe60a"/><stop offset=".45" stop-color="#fdd12c"/><stop offset="1" stop-color="#f2a02c"/></radialGradient></defs><path d="M15 1.700q1.300 0 2.100 1.400l11.400 21.600q1.300 2.900-1.800 3.500H3.300q-3.100-.6-1.800-3.500L12.900 3.100q.8-1.400 2.100-1.400z" fill="url(#wg1)" stroke="#eb9a2a" stroke-width="1"/><path d="M3.800 25.500L14.300 5.500" stroke="#fff3b0" stroke-width="1" opacity=".55"/><rect x="14" y="7.400" width="2.900" height="12.600" fill="#4a3d0a"/><rect x="14" y="23" width="2.900" height="2.900" fill="#4a3d0a"/></svg><div class="abs" style="left:892px;top:792px;width:302px;height:44px;border:1px solid;border-color:#696969 #fff #fff #696969;box-shadow:inset 1px 1px 0 #a0a0a0"></div><div class="t" style="left:893px;top:795px;width:299px;text-align:center;font-size:11px;font-weight:bold;color:#f00"><span style="background:#e3e3e3;display:inline-block;height:13px;line-height:13px;padding:0 1px">Von den zuletzt gedruckten/zu überprüfenden</span></div><div class="t" style="left:893px;top:808px;width:299px;text-align:center;font-size:11px;font-weight:bold;color:#f00"><span style="background:#e3e3e3;display:inline-block;height:13px;line-height:13px;padding:0 1px">Mandantenbeständen wurden 4 noch nicht an das</span></div><div class="t" style="left:893px;top:821px;width:299px;text-align:center;font-size:11px;font-weight:bold;color:#f00"><span style="background:#e3e3e3;display:inline-block;height:13px;line-height:13px;padding:0 1px">Finanzamt übermittelt.</span></div><svg class="abs" style="left:1189px;top:854px" width="14" height="14" viewBox="0 0 14 14"><path d="M13.500 1.500L1.500 13.500M13.500 6.500L6.500 13.500M13.500 11.500l-2 2" stroke="#fff" stroke-width="1.300"/><path d="M13 .5L.5 13M13 5.500L5.500 13M13 10.500L10.500 13" stroke="#858585" stroke-width="1.400"/></svg>
<div class="abs" style="left:530px;top:376px;width:461px;height:297px;background:#f0f0f0;border:1px solid #a0a0a0"></div><div class="abs" style="left:531px;top:377px;width:459px;height:30px;background:#fff"></div><div class="t" style="left:539px;top:386px;font-size:12px;letter-spacing:-0.05px;color:#a8a8a8">Mandant speichern unter (Übertrag)</div><div class="t" style="left:918px;top:384px;font-size:12.5px;color:#b0b0b0">?</div><svg class="abs" style="left:961px;top:385px" width="11" height="11" viewBox="0 0 11 11"><path d="M.5.5l10 10M10.500.5l-10 10" stroke="#9a9a9a" stroke-width="1"/></svg><div class="abs" style="left:528px;top:456px;width:4px;height:217px;background:linear-gradient(90deg,#cfcfcf 0,#d6d6d6 40%,#e2e2e2 75%,#ececec 100%)"></div><div class="abs" style="left:990px;top:605px;width:1px;height:5px;background:#5f9cc6"></div><div class="abs" style="left:990px;top:619px;width:1px;height:5px;background:#5f9cc6"></div><div class="abs" style="left:542px;top:424px;width:436px;height:161px;border:1px solid #a6a6a6;box-shadow:1px 1px 0 #fff, inset 1px 1px 0 #fff"></div><div class="t lbl" style="left:549px;top:419px;background:#f0f0f0;padding:0 2px">Ordnungsbegriff</div><div class="sunk" style="left:555px;top:553px;width:13px;height:13px"></div><svg class="abs" style="left:557px;top:555px" width="9" height="9" viewBox="0 0 9 9"><path d="M1 3.500l2.500 2.700L8 1.200" stroke="#000" stroke-width="1.800" fill="none"/></svg><div class="t lbl" style="left:947px;top:553px">)</div><div class="t lbl" style="left:542px;top:603px">Datenpfad</div><div class="btn" style="left:936px;top:600px;width:16px;height:17px"></div><div class="btn" style="left:957px;top:598px;width:21px;height:21px"></div><svg class="abs" style="left:961px;top:603px" width="12" height="11" viewBox="0 0 12 11"><rect x=".5" y=".5" width="11" height="9" fill="#f6f6f6" stroke="#6e6e6e"/><rect x="1" y="1" width="10" height="2" fill="#a0a0a0"/><path d="M2.500 7.500h6M8.500 5.500v2" stroke="#9a9a9a" stroke-width=".8"/><rect x="9" y="0" width="3" height="2" fill="#e03030"/></svg><div class="btn" style="left:542px;top:638px;width:80px;height:23px"></div><div class="btn" style="left:630px;top:638px;width:80px;height:23px"></div><div class="btn" style="left:717px;top:638px;width:80px;height:23px"></div><div class="abs" style="left:572px;top:390px;width:377px;height:269px;background:#f0f0f0;border:1px solid #555"></div><div class="abs" style="left:573px;top:391px;width:375px;height:30px;background:#fff"></div><div class="t" style="left:581px;top:400px;font-size:12px;letter-spacing:-0.05px;color:#000">Mandant speichern unter (Übertrag)</div><svg class="abs" style="left:927px;top:400px" width="11" height="11" viewBox="0 0 11 11"><path d="M.5.5l10 10M10.500.5l-10 10" stroke="#000" stroke-width="1"/></svg><svg class="abs" style="left:585px;top:438px" width="30" height="31" viewBox="0 0 30 31"><defs><radialGradient id="wg2" cx=".46" cy=".42" r=".62"><stop offset="0" stop-color="#ffe60a"/><stop offset=".45" stop-color="#fdd12c"/><stop offset="1" stop-color="#f2a02c"/></radialGradient></defs><path d="M15 1.700q1.300 0 2.100 1.400l11.400 21.600q1.300 2.900-1.800 3.500H3.300q-3.100-.6-1.800-3.500L12.900 3.100q.8-1.400 2.100-1.400z" fill="url(#wg2)" stroke="#eb9a2a" stroke-width="1"/><path d="M3.800 25.500L14.300 5.500" stroke="#fff3b0" stroke-width="1" opacity=".55"/><rect x="14" y="7.400" width="2.900" height="12.600" fill="#4a3d0a"/><rect x="14" y="23" width="2.900" height="2.900" fill="#4a3d0a"/></svg><div class="t tah" style="left:635px;top:439px">Wollen Sie die ausgewählten Bestände des alten</div><div class="t tah" style="left:635px;top:452px">Ordnungsbegriffs löschen?</div><div class="t tah" style="left:635px;top:478px">Beachten Sie, dass übermittelte</div><div class="t tah" style="left:635px;top:491px">Belegnachreichungen/Sonstige Nachrichten und</div><div class="t tah" style="left:635px;top:504px">elektronische Bescheide (ESt) nicht automatisch übertragen</div><div class="t tah" style="left:635px;top:517px">werden.</div><div class="t tah" style="left:633px;top:556px;color:#0066cc;text-decoration:underline">Auswirkungen auf digitale Belege, elektronische Bescheide,</div><div class="t tah" style="left:633px;top:569px;color:#0066cc;text-decoration:underline">übermittelte Belegnachreichungen und Sonstige&nbsp;</div><div class="t tah" style="left:633px;top:582px;color:#0066cc;text-decoration:underline">Nachrichten (Dok.-Nr. 1007092)</div><div class="abs" style="left:678px;top:627px;width:75px;height:23px;border:1px solid #6b6b6b"></div><div class="btn" style="left:679px;top:628px;width:73px;height:21px"></div><div class="t tah" style="left:678px;top:633px;width:75px;text-align:center">Ja</div><div class="btn" style="left:768px;top:627px;width:75px;height:23px"></div><div class="t tah" style="left:768px;top:633px;width:75px;text-align:center">Nein</div><div class="btn" style="left:858px;top:627px;width:75px;height:23px"></div><div class="t tah" style="left:858px;top:633px;width:75px;text-align:center">Abbrechen</div>
<div id="status"></div><div class="abs" style="left:1718px;top:101px;width:2px;height:918px;background:#f3f2ef"></div><div class="abs" style="left:1204px;top:1023px;width:38px;height:16px;border-left:1px solid #a9a9a9;border-top:1px solid #a9a9a9;border-right:1px solid #fff"></div><div class="abs" style="left:1245px;top:1023px;width:50px;height:16px;border-left:1px solid #a9a9a9;border-top:1px solid #a9a9a9;border-right:1px solid #fff"></div><div class="abs" style="left:1298px;top:1023px;width:125px;height:16px;border-left:1px solid #a9a9a9;border-top:1px solid #a9a9a9;border-right:1px solid #fff"></div><div class="abs" style="left:1426px;top:1023px;width:139px;height:16px;border-left:1px solid #a9a9a9;border-top:1px solid #a9a9a9;border-right:1px solid #fff"></div><div class="abs" style="left:1568px;top:1023px;width:92px;height:16px;border-left:1px solid #a9a9a9;border-top:1px solid #a9a9a9;border-right:1px solid #fff"></div><div class="abs" style="left:1663px;top:1023px;width:33px;height:16px;border-left:1px solid #a9a9a9;border-top:1px solid #a9a9a9;border-right:1px solid #fff"></div><div class="abs" style="left:1699px;top:1023px;width:23px;height:16px;border-left:1px solid #a9a9a9;border-top:1px solid #a9a9a9;border-right:1px solid #fff"></div><div class="t" style="left:1666px;top:1026px;font-size:12px;color:#111">NUM</div><div id="taskbar"><div class="abs" style="left:0;top:0;width:1720px;height:4px;background:#000"></div><div class="abs" style="left:0;top:4px;width:1720px;height:4px;background:#1a1a1a"></div></div><div class="abs" style="left:486px;top:1040px;width:48px;height:40px;background:#33363a"></div><div class="abs" style="left:486px;top:1040px;width:48px;height:4px;background:#2e2e2e"></div><div class="abs" style="left:486px;top:1044px;width:48px;height:4px;background:#454545"></div><div class="abs" style="left:-0px;top:1078px;width:40px;height:2px;background:#76b9ed"></div><div class="abs" style="left:98px;top:1078px;width:40px;height:2px;background:#76b9ed"></div><div class="abs" style="left:146px;top:1078px;width:40px;height:2px;background:#76b9ed"></div><div class="abs" style="left:196px;top:1078px;width:40px;height:2px;background:#76b9ed"></div><div class="abs" style="left:244px;top:1078px;width:40px;height:2px;background:#76b9ed"></div><div class="abs" style="left:294px;top:1078px;width:40px;height:2px;background:#76b9ed"></div><div class="abs" style="left:342px;top:1078px;width:40px;height:2px;background:#76b9ed"></div><div class="abs" style="left:392px;top:1078px;width:40px;height:2px;background:#76b9ed"></div><div class="abs" style="left:440px;top:1078px;width:40px;height:2px;background:#76b9ed"></div><div class="abs" style="left:486px;top:1078px;width:48px;height:2px;background:#76b9ed"></div><div class="abs" style="left:179px;top:1078px;width:1px;height:2px;background:#02040a"></div><div class="abs" style="left:180px;top:1078px;width:8px;height:2px;background:#4f7da3"></div><div class="abs" style="left:277px;top:1078px;width:1px;height:2px;background:#02040a"></div><div class="abs" style="left:278px;top:1078px;width:8px;height:2px;background:#4f7da3"></div><svg class="abs" style="will-change:transform;left:6.5px;top:1047.0px" width="25.9" height="25.9" viewBox="0 0 24 24"><path d="M2 4.500h7l1.500 2H22v13H2z" fill="#e9a820"/><path d="M2 7h20v12.500H2z" fill="#fbd664"/><path d="M6 13h12v6.500H6z" fill="#3a98e0"/><path d="M9 16h6v3.500H9z" fill="#fbd664"/></svg><svg class="abs" style="will-change:transform;left:54.5px;top:1047.0px" width="28.1" height="28.1" viewBox="0 0 26 26"><ellipse cx="11" cy="10" rx="10" ry="6.500" transform="rotate(-20 11 10)" fill="#f4f4f4" stroke="#c8302a" stroke-width="1.500"/><path d="M2 14q4 5 11 2" stroke="#8a8a8a" stroke-width="2" fill="none"/><path d="M11.500 4l3 13M17 5l-5 12" stroke="#9aa" stroke-width="1.200"/><ellipse cx="15" cy="19.500" rx="2" ry="3" fill="none" stroke="#2a8fd8" stroke-width="1.500" transform="rotate(20 15 19.500)"/><ellipse cx="19.500" cy="17" rx="2" ry="3" fill="none" stroke="#2a8fd8" stroke-width="1.500" transform="rotate(60 19.500 17)"/></svg><svg class="abs" style="will-change:transform;left:102.4px;top:1048.0px" width="30.2" height="28.1" viewBox="0 0 28 26"><circle cx="14.500" cy="4.500" r="3.200" fill="#5b5fc7"/><circle cx="21" cy="5.500" r="2.200" fill="#5b5fc7"/><path d="M9 8.500h11v8q0 4.500-5.500 4.500T9 16.500z" fill="#4f52b2"/><path d="M18 9h6.500v6q0 3-3.200 3T18 15z" fill="#5b5fc7"/><rect x="2" y="6.500" width="11" height="11" rx="1" fill="#4b53bc"/><path d="M4.800 9.500h5.400M7.500 9.500v6" stroke="#fff" stroke-width="1.600"/><circle cx="19" cy="18.300" r="7.400" fill="#c4201c"/><path d="M17.300 15.800l2.200-1.400V22.500" stroke="#fff" stroke-width="1.700" fill="none"/></svg><svg class="abs" style="will-change:transform;left:153.5px;top:1047.0px" width="25.9" height="25.9" viewBox="0 0 24 24"><rect x="2.500" y="1" width="19" height="21" fill="#f4f4f4" stroke="#d8d8d8"/><path d="M11.500 2.500Q5 8 7 15q2 6 9 5.500l4-2.500-2.500-4-3 1.500Q10 12 12.500 4.500z" fill="#5cb82a" stroke="#3c8f16" stroke-width=".8"/><path d="M10.500 4.500Q6.500 10 9 16" stroke="#bfe89a" stroke-width="1.200" fill="none"/></svg><svg class="abs" style="will-change:transform;left:202.5px;top:1048.0px" width="25.9" height="25.9" viewBox="0 0 24 24"><rect x="8" y="1.500" width="14" height="16" fill="#1a78c8"/><rect x="15" y="1.500" width="7" height="5.500" fill="#37a4ea"/><rect x="15" y="7" width="7" height="5.500" fill="#1f8ad8"/><rect x="8" y="7" width="7" height="5.500" fill="#0f5ea8"/><path d="M8 12.500l14 0v8.500H8z" fill="#1b8bd6"/><path d="M8 21l14-8v8z" fill="#2aa0ea"/><rect x="1.500" y="6" width="11.500" height="11.500" rx="1" fill="#0f6cbd"/><circle cx="7.200" cy="11.700" r="2.900" fill="none" stroke="#fff" stroke-width="1.700"/></svg><svg class="abs" style="will-change:transform;left:250.5px;top:1047.0px" width="28.1" height="25.9" viewBox="0 0 26 24"><circle cx="14" cy="11.500" r="10" fill="#e8603c"/><path d="M14 1.500a10 10 0 0 1 10 10H14z" fill="#f58d6a"/><path d="M14 21.500a10 10 0 0 0 10-10H14z" fill="#d24726"/><rect x="1.500" y="6" width="11.500" height="11.500" rx="1" fill="#c43e1c"/><path d="M5.500 15V8.500h2.700q2.300 0 2.300 2t-2.300 2H5.500" stroke="#fff" stroke-width="1.600" fill="none"/></svg><svg class="abs" style="will-change:transform;left:300.5px;top:1047.0px" width="25.9" height="25.9" viewBox="0 0 24 24"><path d="M2.500 1h19v17q-1 4-5 4h-14z" fill="#f0f0f0" stroke="#d0d0d0"/><path d="M2.500 11l6.500 5 7-5.500M2.500 20l6.500-5M16 20l-5-4.500" stroke="#c4c4c4" stroke-width=".9" fill="none"/><path d="M16 2.500Q12.500 6 13.500 11.500t4.500 5.500l1.500-1.500-2-2.500-1.300.6Q14.500 10 16 6.800l1.200.5.800-3.300z" fill="#4ca626" stroke="#2e7d12" stroke-width=".6"/></svg><svg class="abs" style="will-change:transform;left:349.5px;top:1047.0px" width="25.9" height="25.9" viewBox="0 0 24 24"><circle cx="12" cy="12" r="10.500" fill="#e8eefc"/><circle cx="12" cy="12" r="9.500" fill="#5c82dc"/><circle cx="12" cy="9" r="6.500" fill="#8fb0f0" opacity=".7"/><circle cx="12" cy="12" r="10" fill="none" stroke="#dfe8fb" stroke-width="1.300"/><path d="M8.500 12V8.500q0-3.500 3.500-3.500t3.500 3.500V12" stroke="#a8bfee" stroke-width="1.800" fill="none"/><rect x="6" y="11.500" width="12" height="8.500" fill="#0d1430"/><path d="M6 14h12M6 17h12" stroke="#4a5a98" stroke-width=".8"/><rect x="11" y="13.500" width="2" height="3.500" fill="#c8d4f4"/></svg><svg class="abs" style="will-change:transform;left:398.5px;top:1047.0px" width="25.9" height="25.9" viewBox="0 0 24 24"><rect x="8" y="1.500" width="14.500" height="20" rx="1" fill="#c768d8"/><rect x="18" y="1.500" width="4.500" height="5" fill="#d586e4"/><rect x="18" y="6.500" width="4.500" height="5" fill="#b445c8"/><rect x="18" y="11.500" width="4.500" height="5" fill="#9a2cb0"/><rect x="18" y="16.500" width="4.500" height="5" fill="#7b1b92"/><rect x="1.500" y="6" width="11.500" height="11.500" rx="1" fill="#7719aa"/><path d="M5 15V8.500l4.500 6.500V8.500" stroke="#fff" stroke-width="1.600" fill="none"/></svg><svg class="abs" style="will-change:transform;left:447.5px;top:1047.0px" width="25.9" height="25.9" viewBox="0 0 24 24"><path d="M1 1h20.500v20.500H8q-7-1-7-7z" fill="#fdfdfd" stroke="#c9c9c9" stroke-width=".7"/><path d="M1.200 1.800h13v3H4.500v4.300h8.500v3H4.500v4.800h7.500v3H6q-4.800-1-4.800-5z" fill="#aeb4cc"/><path d="M1.500 2.500h12v1.600H3.800v5.700h8.700v1.600H3.800v6.200h8v1.600H6q-4.500-.8-4.500-4.500z" fill="#3f4a70"/><text x="10.800" y="20.300" font-family="Liberation Sans" font-size="11" fill="#3a7a20" textLength="9.200" lengthAdjust="spacingAndGlyphs">St</text></svg><svg class="abs" style="will-change:transform;left:496.5px;top:1047.0px" width="25.9" height="25.9" viewBox="0 0 24 24"><path d="M1 1h20.500v20.500H8q-7-1-7-7z" fill="#fdfdfd" stroke="#c9c9c9" stroke-width=".7"/><path d="M1.200 1.800h13v3H4.500v4.300h8.500v3H4.500v4.800h7.500v3H6q-4.800-1-4.800-5z" fill="#aeb4cc"/><path d="M1.500 2.500h12v1.600H3.800v5.700h8.700v1.600H3.800v6.200h8v1.600H6q-4.500-.8-4.500-4.500z" fill="#3f4a70"/><text x="10.800" y="20.300" font-family="Liberation Sans" font-size="11" fill="#3a7a20" textLength="9.200" lengthAdjust="spacingAndGlyphs">St</text></svg><svg class="abs" style="left:1510px;top:1054px" width="14" height="10"><path d="M1 8l6-6 6 6" stroke="#f4f4f4" stroke-width="1.300" fill="none"/></svg><svg class="abs" style="left:1534px;top:1052px" width="14" height="18" viewBox="0 0 14 18"><path d="M1.500 3.500l10-1.500V5l-10 1z" fill="#9aa4b8"/><rect x="2" y="5.500" width="10" height="10.500" fill="#c0131b"/><path d="M2 5.500h10v2H2z" fill="#e04048"/><text x="4.600" y="14.500" font-family="Liberation Sans" font-weight="bold" font-size="8.500" fill="#fff">?</text></svg><svg class="abs" style="left:1556px;top:1052px" width="18" height="16" viewBox="0 0 18 16"><rect x="4.500" y="2.500" width="12" height="8.500" fill="none" stroke="#f4f4f4" stroke-width="1.200"/><path d="M10.500 11v3M7 14.500h7" stroke="#f4f4f4" stroke-width="1.200"/><rect x="1.500" y="2.500" width="4" height="4" fill="#02040a" stroke="#f4f4f4" stroke-width="1"/><path d="M3.500 6.500v8H6" stroke="#f4f4f4" stroke-width="1.200" fill="none"/><path d="M2.500 4l1 1 1.300-1.500" stroke="#f4f4f4" stroke-width=".7" fill="none"/></svg><svg class="abs" style="left:1580px;top:1051px" width="19" height="18" viewBox="0 0 19 18"><path d="M1.500 6.500h3L8 3v12L4.500 11.500h-3z" fill="none" stroke="#f4f4f4" stroke-width="1.100"/><path d="M10.500 6.500q1.500 2.500 0 5M12.800 4.500q2.800 4.500 0 9M15.200 2.500q4 6.500 0 13" stroke="#f4f4f4" stroke-width="1.100" fill="none"/></svg><div class="t" style="left:1600px;top:1045px;width:68px;text-align:center;font-size:12px;letter-spacing:-0.6px;color:#fff">14:18</div><div class="t" style="left:1600px;top:1063px;width:68px;text-align:center;font-size:12px;letter-spacing:-0.6px;color:#fff">08.10.2024</div><svg class="abs" style="left:1676px;top:1049px" width="32" height="28" viewBox="0 0 32 28"><path d="M3 3.500h16v12h-11l-3.500 3V15.500H3z" fill="#fff"/><path d="M6 6.500h10M6 9h10M6 11.500h10" stroke="#02040a" stroke-width="1.100"/><circle cx="18.500" cy="18" r="9" fill="#2c2f36" stroke="#6a6d74" stroke-width="1"/><text x="11.800" y="22.500" font-family="Liberation Sans" font-weight="bold" font-size="12.500" fill="#fff" textLength="13.500" lengthAdjust="spacingAndGlyphs">20</text></svg><div class="abs" style="left:1715px;top:1044px;width:1px;height:36px;background:#5a5a5a"></div>
</body></html>
